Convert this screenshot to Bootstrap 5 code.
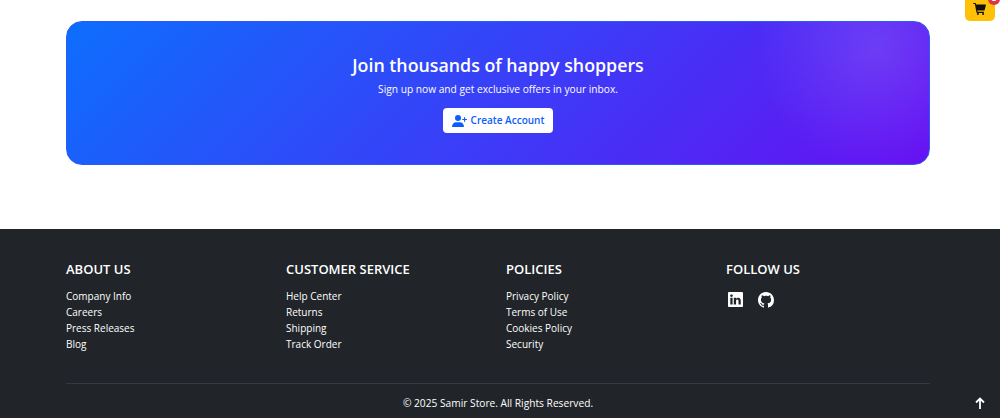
<!DOCTYPE html>
<html lang="en">
<head>
    <meta charset="UTF-8">
    <title>Samir Store</title>
    <link href="https://cdn.jsdelivr.net/npm/bootstrap@5.3.3/dist/css/bootstrap.min.css" rel="stylesheet">
    <style>
        body {
            font-family: "Open Sans", "Noto Sans", sans-serif;
            background-color: #ffffff;
            overflow: hidden;
        }
        .page-wrap {
            width: 864px;
            margin-left: 66px;
        }
        .top-gap {
            height: 21px;
        }
        .cta-banner {
            height: 144px;
            border-radius: 16px;
            border: 1px solid #2a5cf8;
            background:
                radial-gradient(circle at 94% 18%, rgba(255, 255, 255, .13), rgba(255, 255, 255, 0) 15%),
                linear-gradient(135deg, #0d6efd, #6610f2);
            margin-bottom: 64px;
        }
        .cta-banner h2 {
            font-size: 17.8px;
            font-weight: 600;
            margin-bottom: 4px;
            line-height: 24px;
        }
        .cta-banner p {
            font-size: 10.2px;
            margin-bottom: 11px;
            line-height: 16px;
        }
        .cta-btn {
            font-size: 10px;
            font-weight: 600;
            height: 25px;
            width: 110px;
            padding: 0;
            color: #0d5cfd;
            border-radius: 4px;
            background-color: #ffffff;
        }
        .store-footer {
            height: 189px;
            background-color: #212529;
            color: #ffffff;
            padding-top: 31px;
        }
        .foot-cols {
            display: grid;
            grid-template-columns: repeat(4, 220px);
            height: 123px;
        }
        .foot-cols h5 {
            font-size: 13px;
            font-weight: 600;
            line-height: 18px;
            margin-bottom: 10px;
        }
        .foot-cols a {
            display: block;
            font-size: 10px;
            line-height: 16px;
            color: #ffffff;
            text-decoration: none;
        }
        .social-row {
            gap: 15px;
            padding-left: 2px;
        }
        .foot-line {
            border-top: 1px solid #343a40;
            padding-top: 11px;
            font-size: 10.2px;
            line-height: 16px;
        }
        .cart-tab {
            position: absolute;
            top: -8px;
            right: 5px;
            width: 30px;
            height: 29px;
            background-color: #ffc107;
            border-radius: 5px;
        }
        .cart-glyph {
            margin-right: 2px;
        }
        .cart-count {
            position: absolute;
            top: 1px;
            right: -5px;
            width: 12px;
            height: 12px;
            background-color: #dc3545;
            border-radius: 50%;
            color: #ffffff;
            font-size: 7px;
            font-weight: 700;
            line-height: 12px;
            text-align: center;
        }
        .to-top {
            position: absolute;
            right: 15px;
            top: 397px;
        }
    </style>
</head>
<body>
<div class="cart-tab d-flex align-items-center justify-content-center pt-1">
    <svg class="d-block cart-glyph" width="13" height="12" viewBox="0 0 16 15" fill="#111"><path d="M0 .7C0 .3.3 0 .7 0h2c.3 0 .6.2.7.5L3.900 2H15.300c.5 0 .8.400.7.900l-1.500 6c-.1.300-.4.600-.7.600H5.200l.3 1.500H13.500v1.400H4.900c-.3 0-.6-.2-.7-.6L2.200 1.400H.7C.3 1.400 0 1.100 0 .7z"/><circle cx="6" cy="13.700" r="1.300"/><circle cx="12.500" cy="13.700" r="1.300"/></svg>
    <span class="cart-count">2</span>
</div>

<div class="page-wrap">
    <div class="top-gap"></div>
    <div class="cta-banner text-white text-center d-flex flex-column align-items-center justify-content-center">
        <h2>Join thousands of happy shoppers</h2>
        <p>Sign up now and get exclusive offers in your inbox.</p>
        <a href="#" class="btn cta-btn d-flex align-items-center justify-content-center gap-1">
            <svg width="15" height="12" viewBox="0 0 20 16" fill="#0d5cfd"><circle cx="8" cy="4" r="4"/><path d="M0 16c0-4 2.500-6.500 5.500-6.500h5c3 0 5.500 2.500 5.500 6.500z"/><path d="M16 3h1.500v2.200H20v1.500h-2.500V9H16V6.700h-2.400V5.200H16z"/></svg>
            Create Account
        </a>
    </div>
</div>

<footer class="store-footer">
    <div class="page-wrap">
        <div class="foot-cols">
            <div>
                <h5>ABOUT US</h5>
                <a href="#">Company Info</a>
                <a href="#">Careers</a>
                <a href="#">Press Releases</a>
                <a href="#">Blog</a>
            </div>
            <div>
                <h5>CUSTOMER SERVICE</h5>
                <a href="#">Help Center</a>
                <a href="#">Returns</a>
                <a href="#">Shipping</a>
                <a href="#">Track Order</a>
            </div>
            <div>
                <h5>POLICIES</h5>
                <a href="#">Privacy Policy</a>
                <a href="#">Terms of Use</a>
                <a href="#">Cookies Policy</a>
                <a href="#">Security</a>
            </div>
            <div>
                <h5>FOLLOW US</h5>
                <div class="d-flex social-row pt-1">
                    <svg width="15" height="15" viewBox="0 0 16 16" fill="#fff"><path d="M0 1.100C0 .5.500 0 1.200 0h13.600C15.500 0 16 .5 16 1.100v13.800c0 .6-.5 1.100-1.200 1.100H1.200C.5 16 0 15.500 0 14.900zM4.900 13.400V6.200H2.500v7.200zM3.700 5.200c.8 0 1.400-.6 1.400-1.300 0-.7-.5-1.300-1.400-1.300-.8 0-1.400.6-1.400 1.300 0 .7.500 1.300 1.400 1.300zM8.600 13.400v-4c0-.2 0-.4.100-.6.200-.4.600-.9 1.300-.9.900 0 1.200.7 1.200 1.700v3.800h2.400V9.300c0-2.200-1.200-3.200-2.700-3.200-1.300 0-1.800.7-2.200 1.200V6.200H6.200c0 .7 0 7.200 0 7.200z"/></svg>
                    <svg width="16" height="16" viewBox="0 0 16 16" fill="#fff"><path d="M8 0C3.580 0 0 3.580 0 8c0 3.540 2.290 6.530 5.470 7.590.4.070.55-.17.55-.38 0-.19-.01-.82-.01-1.490-2.010.37-2.530-.49-2.690-.94-.09-.23-.48-.94-.82-1.130-.28-.15-.68-.52-.01-.53.63-.01 1.080.58 1.230.82.720 1.210 1.870.87 2.330.66.070-.52.280-.87.510-1.070-1.780-.2-3.640-.89-3.640-3.950 0-.87.310-1.590.820-2.150-.08-.2-.36-1.020.08-2.120 0 0 .67-.21 2.200.82.640-.18 1.320-.27 2-.27s1.360.09 2 .27c1.530-1.040 2.200-.82 2.200-.82.440 1.100.160 1.920.080 2.120.51.560.82 1.270.82 2.150 0 3.070-1.870 3.750-3.650 3.950.290.250.540.730.540 1.480 0 1.070-.01 1.930-.01 2.200 0 .21.150.46.550.38A8.010 8.010 0 0 0 16 8c0-4.420-3.580-8-8-8z"/></svg>
                </div>
            </div>
        </div>
        <div class="foot-line text-center">© 2025 Samir Store. All Rights Reserved.</div>
    </div>
</footer>

<div class="to-top">
    <svg class="d-block" width="10" height="12" viewBox="0 0 10 12" fill="none" stroke="#fff" stroke-width="1.800"><path d="M5 12V1.500M1 5.500l4-4 4 4"/></svg>
</div>
</body>
</html>
